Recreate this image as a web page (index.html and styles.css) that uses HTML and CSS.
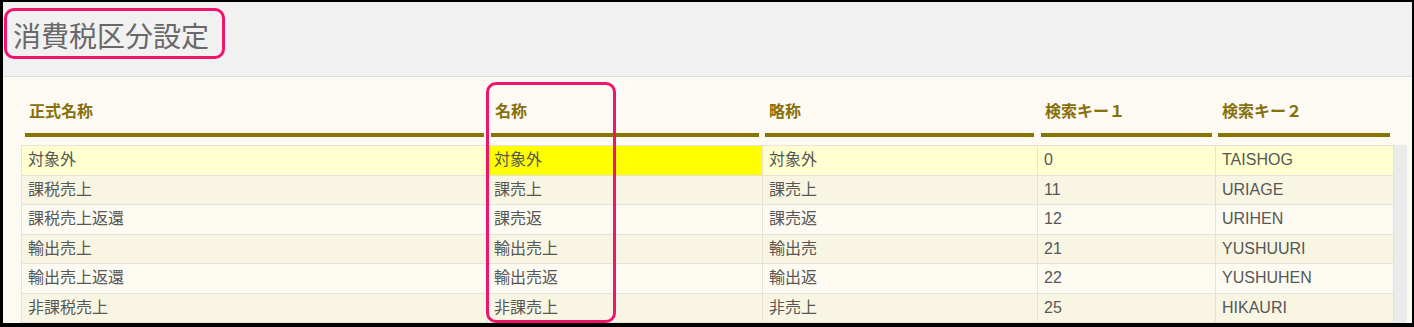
FILE: index.html
```html
<!DOCTYPE html>
<html lang="ja">
<head>
<meta charset="utf-8">
<title>消費税区分設定</title>
<link rel="stylesheet" href="styles.css">
</head>
<body>
<div class="frame">
  <header class="titlebar">
    <h1 class="title">消費税区分設定</h1>
  </header>
  <main class="content">
    <div class="head-row">
      <div class="hcell c1"><span>正式名称</span></div>
      <div class="hcell c2"><span>名称</span></div>
      <div class="hcell c3"><span>略称</span></div>
      <div class="hcell c4"><span>検索キー１</span></div>
      <div class="hcell c5"><span>検索キー２</span></div>
    </div>
    <div class="body-row">
      <table class="grid">
        <colgroup>
          <col class="w1"><col class="w2"><col class="w3"><col class="w4"><col class="w5">
        </colgroup>
        <tbody>
          <tr class="selected"><td>対象外</td><td class="active">対象外</td><td>対象外</td><td>0</td><td>TAISHOG</td></tr>
          <tr class="odd"><td>課税売上</td><td>課売上</td><td>課売上</td><td>11</td><td>URIAGE</td></tr>
          <tr class="even"><td>課税売上返還</td><td>課売返</td><td>課売返</td><td>12</td><td>URIHEN</td></tr>
          <tr class="odd"><td>輸出売上</td><td>輸出売上</td><td>輸出売</td><td>21</td><td>YUSHUURI</td></tr>
          <tr class="even"><td>輸出売上返還</td><td>輸出売返</td><td>輸出返</td><td>22</td><td>YUSHUHEN</td></tr>
          <tr class="odd"><td>非課税売上</td><td>非課売上</td><td>非売上</td><td>25</td><td>HIKAURI</td></tr>
        </tbody>
      </table>
      <div class="scrollbar"></div>
    </div>
  </main>
  <div class="mark mark-title"></div>
  <div class="mark mark-column"></div>
</div>
</body>
</html>
```

FILE: styles.css
```css
html, body {
  margin: 0;
  padding: 0;
  background: #000;
}

.frame {
  position: relative;
  width: 1414px;
  height: 327px;
  box-sizing: border-box;
  border-style: solid;
  border-color: #000;
  border-width: 2px 2px 4px 3px;
  background: #fdfaf3;
  overflow: hidden;
  display: flex;
  flex-direction: column;
  font-family: "Liberation Sans", "Noto Sans CJK JP", sans-serif;
}

.titlebar {
  height: 75px;
  flex: none;
  background: #f1f1f1;
  border-bottom: 1px solid #dddddd;
  padding: 15px 0 0 10px;
  box-sizing: border-box;
}

.title {
  margin: 0;
  font-family: "Noto Sans CJK JP", sans-serif;
  font-weight: normal;
  font-size: 28px;
  line-height: 36px;
  color: #686868;
}

.content {
  flex: 1;
  padding: 0 0 0 18px;
}

.head-row {
  display: flex;
  width: 1372px;
}

.hcell {
  box-sizing: border-box;
  padding: 0 3px;
}

.hcell span {
  display: block;
  padding: 21px 0 11px 4px;
  font-family: "Noto Sans CJK JP", sans-serif;
  font-weight: bold;
  font-size: 16px;
  line-height: 24px;
  color: #86700b;
  border-bottom: 4px solid #8a7400;
}

.c1 { width: 466px; padding-left: 4px; }
.c2 { width: 275px; padding-left: 4px; }
.c3 { width: 275px; }
.c4 { width: 178px; padding-left: 4px; }
.c5 { width: 178px; }

.body-row {
  display: flex;
  align-items: stretch;
  margin-top: 8px;
  height: 180px;
}

.grid {
  width: 1372px;
  flex: none;
  table-layout: fixed;
  border-collapse: collapse;
  align-self: flex-start;
}

.w1 { width: 466px; }
.w2 { width: 275px; }
.w3 { width: 275px; }
.w4 { width: 178px; }
.w5 { width: 178px; }

.grid td {
  height: 28.5px;
  padding: 0 6px;
  border: 1px solid #e4e2da;
  font-size: 16px;
  line-height: 20px;
  color: #575757;
  white-space: nowrap;
  overflow: hidden;
}

.grid tr.selected td { background: #ffffcf; }
.grid tr.selected td.active { background: #ffff00; }
.grid tr.odd td { background: #f8f5e2; }
.grid tr.even td { background: #fdfaf2; }

.scrollbar {
  width: 13px;
  flex: none;
  background: #ebebeb;
}

.mark {
  position: absolute;
  box-sizing: border-box;
  border: 3px solid #f2136d;
  border-radius: 10px;
  pointer-events: none;
}

.mark-title {
  left: 1px;
  top: 6px;
  width: 221px;
  height: 51px;
}

.mark-column {
  left: 483px;
  top: 80px;
  width: 130px;
  height: 241px;
}
```
